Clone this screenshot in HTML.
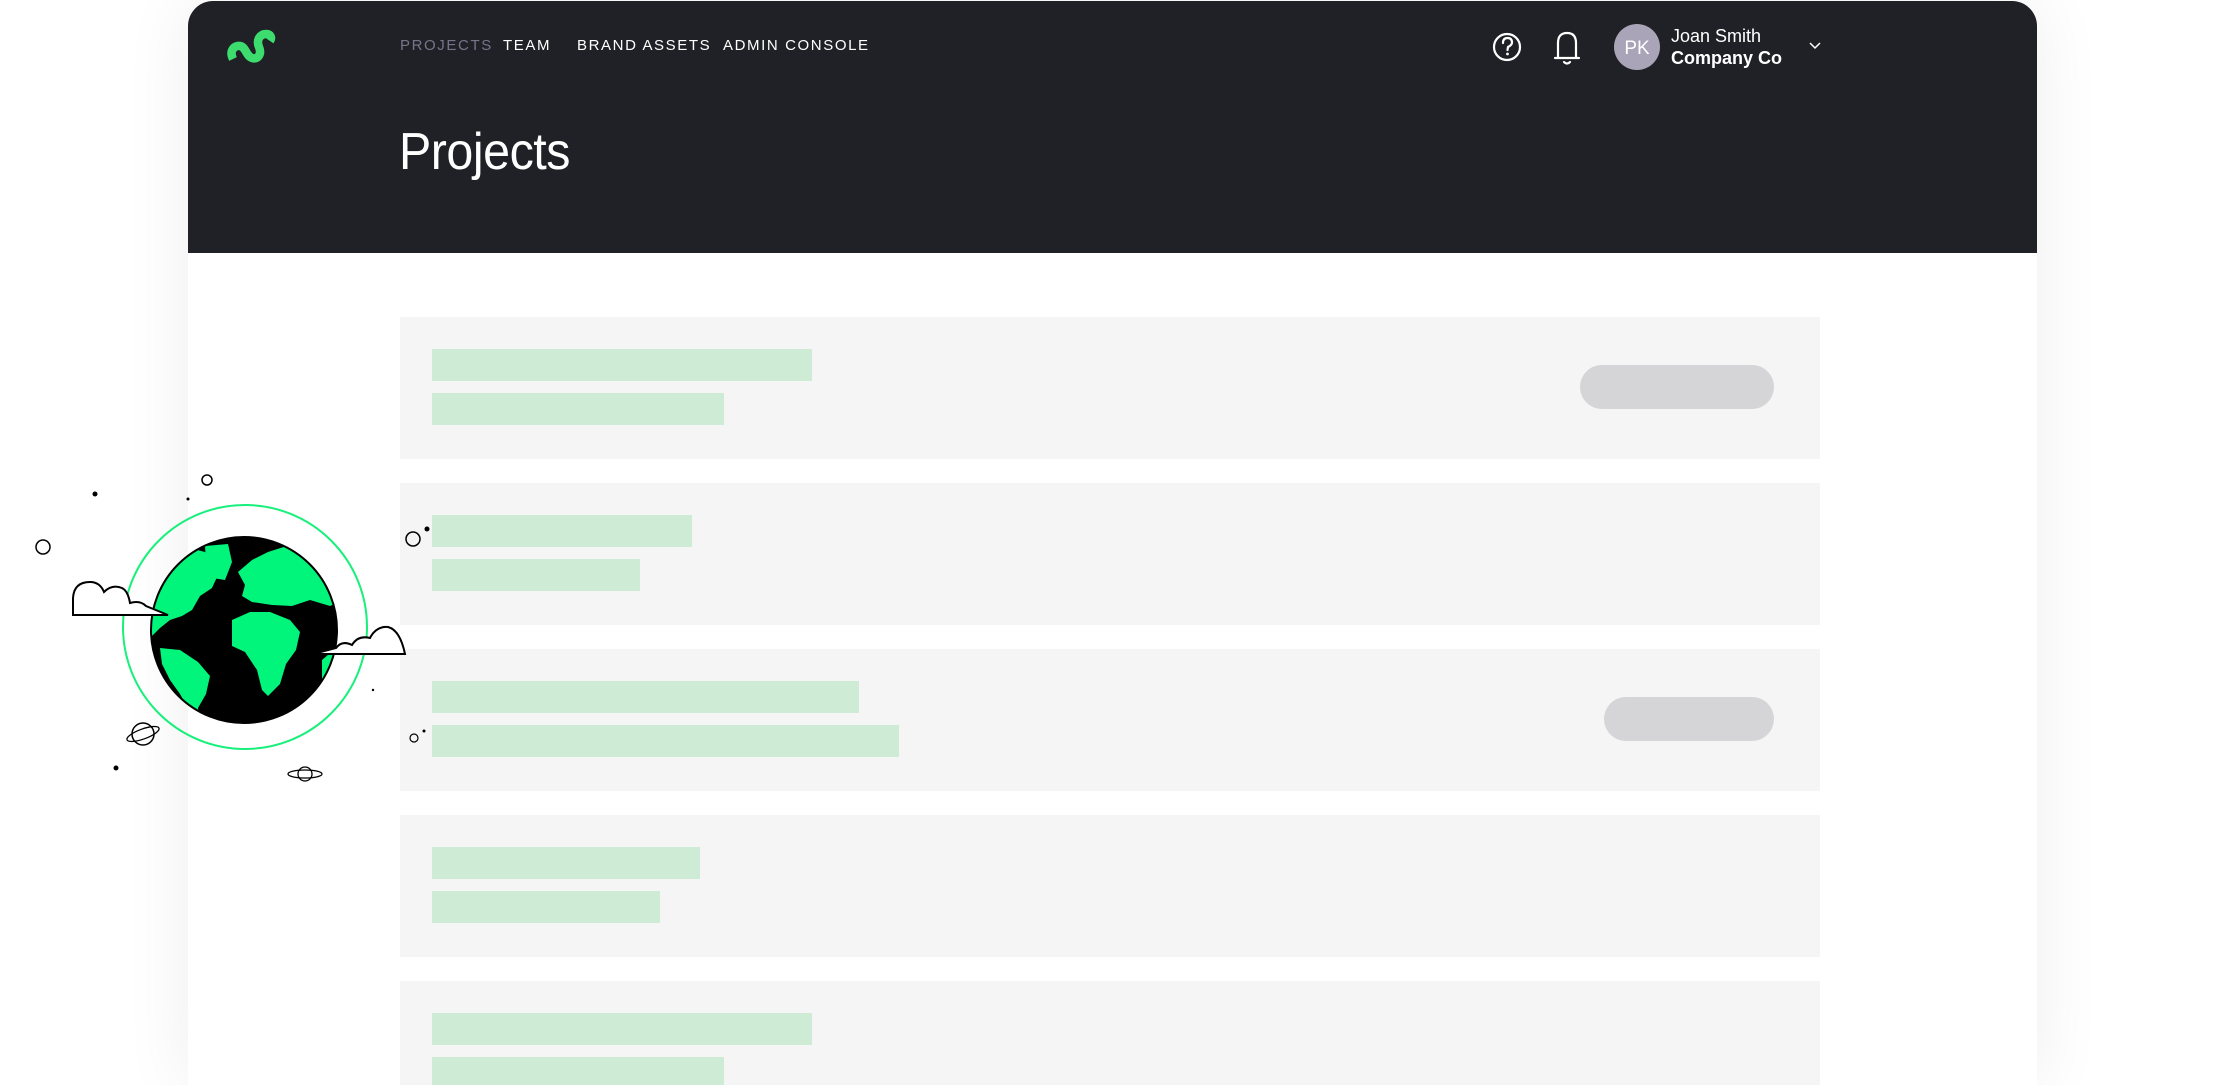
<!DOCTYPE html>
<html><head><meta charset="utf-8"><style>
html,body{margin:0;padding:0;background:#fff;width:2224px;height:1085px;overflow:hidden;font-family:"Liberation Sans",sans-serif}
.wrap{position:absolute;left:0;top:0;width:2224px;height:1085px;overflow:hidden}
.card{position:absolute;left:188px;top:1px;width:1849px;height:1084px;background:#fff;border-radius:25px 25px 0 0;box-shadow:0 0 70px rgba(0,0,0,0.07)}
.hdr{position:absolute;left:0;top:0;width:1849px;height:252px;background:#202126;border-radius:25px 25px 0 0}
.nav{position:absolute;top:36px;font-size:15px;letter-spacing:1.6px;color:#fff}
.title{position:absolute;left:211px;top:121px;font-size:52px;color:#fff;letter-spacing:-0.5px;transform:scaleX(0.93);transform-origin:left}
.row{position:absolute;left:400px;width:1420px;height:142px;background:#f5f5f5}
.bar{position:absolute;left:32px;height:32px;background:#cdebd5}
.pill{position:absolute;height:44px;border-radius:22px;background:#d5d5d7;top:48px}
</style></head><body>
<div class="wrap">
<div class="card">
 <div class="hdr">
  <svg style="position:absolute;left:36px;top:24px" width="54" height="44" viewBox="224 24 54 44">
   <path d="M233,58 C229,50 234,44 240,45 C246,46 246,55 252,57 C258,59 262,53 259,46 C256,39 260,33 266,33 C271,33 272,37 270,40" fill="none" stroke="#3ddc6f" stroke-width="8.5"/>
  </svg>
  <div class="nav" style="left:212px;color:#77748a">PROJECTS</div>
  <div class="nav" style="left:315px">TEAM</div>
  <div class="nav" style="left:389px">BRAND ASSETS</div>
  <div class="nav" style="left:535px">ADMIN CONSOLE</div>
  <div class="title">Projects</div>
  <svg style="position:absolute;left:1300px;top:20px" width="560" height="56">
   <circle cx="19" cy="26" r="13" fill="none" stroke="#fff" stroke-width="2.2"/>
   <path d="M15,22 Q15,17 19.5,17 Q24,17 24,21.5 Q24,24 20,26 L19.5,29" fill="none" stroke="#fff" stroke-width="2.2" stroke-linecap="round"/>
   <circle cx="19.5" cy="33" r="1.4" fill="#fff"/>
   <path d="M70,37 L70,22 Q70,12 79,12 Q88,12 88,22 L88,37 M67,37 L91,37 M76,41 Q79,44 82,41" fill="none" stroke="#fff" stroke-width="2.2" stroke-linecap="round"/>
   <circle cx="149" cy="26" r="23" fill="#a9a4b8"/>
   <text x="149" y="33" font-family="Liberation Sans" font-size="19" fill="#fff" text-anchor="middle">PK</text>
   <path d="M322,22 L327,27 L332,22" fill="none" stroke="#fff" stroke-width="1.5"/>
  </svg>
  <div style="position:absolute;left:1483px;top:24px;color:#fff;font-size:18px;line-height:22px">Joan Smith<br><b>Company Co</b></div>
 </div>
</div>
<div class="row" style="top:317px"><div class="bar" style="top:32px;width:380px"></div><div class="bar" style="top:76px;width:292px"></div><div class="pill" style="left:1180px;width:194px"></div></div>
<div class="row" style="top:483px"><div class="bar" style="top:32px;width:260px"></div><div class="bar" style="top:76px;width:208px"></div></div>
<div class="row" style="top:649px"><div class="bar" style="top:32px;width:427px"></div><div class="bar" style="top:76px;width:467px"></div><div class="pill" style="left:1204px;width:170px"></div></div>
<div class="row" style="top:815px"><div class="bar" style="top:32px;width:268px"></div><div class="bar" style="top:76px;width:228px"></div></div>
<div class="row" style="top:981px"><div class="bar" style="top:32px;width:380px"></div><div class="bar" style="top:76px;width:292px"></div></div>
<svg style="position:absolute;left:0;top:0" width="480" height="1085">
 <defs><clipPath id="e"><circle cx="244" cy="630" r="93"/></clipPath></defs>
 <circle cx="245" cy="627" r="122" fill="none" stroke="#17f07a" stroke-width="2"/>
 <circle cx="244" cy="630" r="93" fill="#000"/>
 <g clip-path="url(#e)" fill="#00f57a">
  <path d="M145,585 L158,562 L172,552 L190,548 L205,552 L212,560 L218,575 L212,588 L200,596 L192,610 L182,616 L170,620 L160,628 L148,640 Z"/>
  <path d="M205,546 L228,544 L232,562 L225,580 L212,578 L206,562 Z"/>
  <path d="M160,648 L180,650 L198,662 L210,676 L206,694 L198,708 L200,722 L190,712 L180,694 L170,680 L162,664 Z"/>
  <path d="M238,572 L252,560 L268,552 L290,545 L315,548 L338,560 L342,600 L330,606 L310,600 L292,606 L272,605 L252,602 L242,596 L245,585 Z"/>
  <path d="M232,620 L250,612 L270,612 L290,620 L300,632 L296,650 L286,664 L280,684 L268,696 L262,690 L257,670 L245,652 L232,646 Z"/>
  <path d="M322,660 L336,648 L342,672 L332,692 L322,684 Z"/>
 </g>
 <circle cx="244" cy="630" r="93" fill="none" stroke="#000" stroke-width="2"/>
 <path d="M73,615 L73,598 Q74,582 90,582 Q100,582 104,592 Q112,584 122,588 Q128,591 130,603 Q140,600 146,606 L168,615 Z" fill="#fff" stroke="#000" stroke-width="2"/>
 <path d="M313,654 L336,648 Q342,640 352,645 Q358,635 370,638 Q376,626 388,627 Q400,630 405,654 Z" fill="#fff" stroke="#000" stroke-width="2"/>
 <circle cx="43" cy="547" r="7" fill="none" stroke="#000" stroke-width="1.5"/>
 <circle cx="207" cy="480" r="5" fill="none" stroke="#000" stroke-width="1.5"/>
 <circle cx="413" cy="539" r="7" fill="none" stroke="#000" stroke-width="1.5"/>
 <circle cx="414" cy="738" r="4" fill="none" stroke="#000" stroke-width="1.2"/>
 <circle cx="143" cy="734" r="11" fill="none" stroke="#000" stroke-width="1.5"/>
 <ellipse cx="143" cy="734" rx="17" ry="5" transform="rotate(-20 143 734)" fill="none" stroke="#000" stroke-width="1.3"/>
 <circle cx="305" cy="774" r="7" fill="none" stroke="#000" stroke-width="1.3"/>
 <ellipse cx="305" cy="774" rx="17" ry="4" fill="none" stroke="#000" stroke-width="1.3"/>
 <circle cx="95" cy="494" r="2.5" fill="#000"/><circle cx="188" cy="499" r="1.5" fill="#000"/>
 <circle cx="116" cy="768" r="2.5" fill="#000"/><circle cx="427" cy="529" r="2.5" fill="#000"/>
 <circle cx="424" cy="731" r="1.5" fill="#000"/><circle cx="373" cy="690" r="1.2" fill="#000"/>
</svg>
</div>
</body></html>
